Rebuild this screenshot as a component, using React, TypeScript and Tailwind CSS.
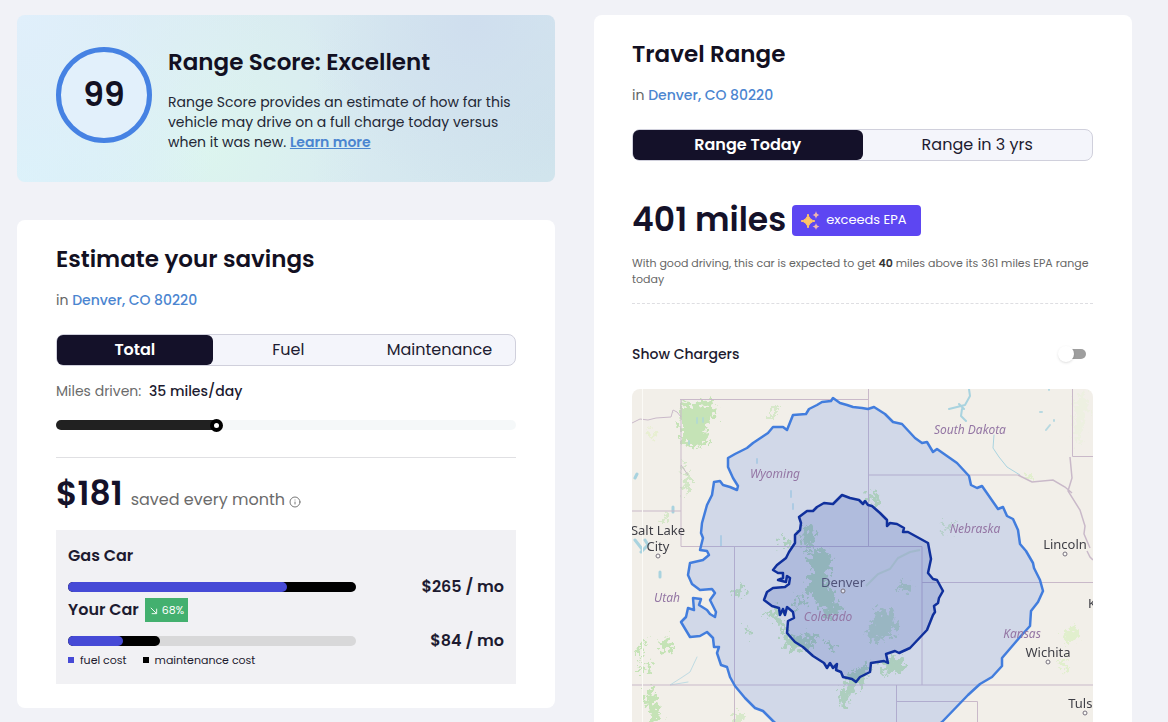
import React, { useState } from 'react';
import { Info } from 'lucide-react';

const costs = [
    { name: 'Gas Car', price: '$265 / mo', total: 100, fuel: 76, saving: '' },
    { name: 'Your Car', price: '$84 / mo', total: 32, fuel: 19, saving: '68%' },
];

const OUTER_RANGE =
    'M833 398L840 403L847 405L853 407L862 408L868 409L874 407L885 414L893 422L902 424L915 438L922 443L927 442L933 452L937 449L957 463L969 476L971 485L977 488L982 486L998 509L1003 507L1007 516L1013 519L1018 530L1020 544L1026 551L1033 563L1034 568L1040 580L1043 591L1038 602L1031 611L1030 626L1020 637L1002 658L1002 666L992 677L980 684L968 695L942 722L905 755L860 775L810 755L773 721L763 711L755 708L745 698L735 686L730 677L727 667L721 665L717 653L719 647L714 647L713 638L707 632L700 636L690 637L681 622L686 617L688 608L694 610L693 598L701 599L699 605L707 610L710 614L715 617L716 612L710 600L715 593L712 589L700 590L692 584L688 575L690 563L703 560L709 555L707 551L700 550L703 538L701 533L702 523L707 505L712 495L714 482L720 481L723 485L730 487L737 490L738 486L733 478L728 467L728 458L735 454L747 448L753 443L768 433L773 427L783 427L787 430L789 425L793 415L806 414L809 409L817 405L822 402L831 401Z';

const INNER_RANGE =
    'M842 495L850 498L859 500L863 504L865 501L868 505L872 506L880 513L887 520L887 526L890 523L897 524L904 528L903 532L908 532L928 543L931 559L928 573L933 579L937 580L943 591L939 598L938 603L934 606L935 612L933 615L927 630L910 648L899 653L895 651L886 654L888 663L884 661L871 663L870 672L860 677L856 682L852 679L843 677L841 672L836 670L837 664L833 668L830 663L827 668L824 663L813 656L803 647L795 642L787 633L788 621L794 618L793 612L787 607L785 615L783 609L780 615L779 608L772 606L764 600L767 592L773 588L785 587L789 584L790 578L787 576L786 582L778 580L783 578L783 573L778 573L773 570L777 565L786 558L789 552L795 543L795 535L800 530L801 523L799 517L807 511L813 511L817 507L824 503L833 504Z';

function Location() {
    return (
        <p className="mt-[13px] text-sm leading-5 text-[#666]">
            in{' '}
            <a href="#location" className="font-medium text-[#4b85d0]">
                Denver, CO 80220
            </a>
        </p>
    );
}

type TabsProps = { items: string[]; className: string };

function Tabs({ items, className }: TabsProps) {
    const [active, setActive] = useState(0);

    return (
        <div className={`mt-6 grid h-8 rounded-lg border border-[#d0d0dc] bg-[#f4f5fb] ${className}`}>
            {items.map((item, i) => (
                <button
                    key={item}
                    type="button"
                    onClick={() => setActive(i)}
                    className={
                        i === active
                            ? 'rounded-md bg-[#141129] text-base font-semibold text-white'
                            : 'text-base text-[#1d1b30]'
                    }
                >
                    {item}
                </button>
            ))}
        </div>
    );
}

function ScoreCard() {
    return (
        <section className="flex items-start gap-4 rounded-lg bg-[radial-gradient(circle_at_85%_5%,#cfdeee_0%,#cfdeee00_35%),radial-gradient(circle_at_100%_70%,#cfe3ec_0%,#cfe3ec00_45%),radial-gradient(circle_at_0%_0%,#e0effb_0%,#e0effb00_45%),radial-gradient(circle_at_0%_100%,#daf3fa_0%,#daf3fa00_35%),radial-gradient(circle_at_35%_80%,#dcf5ee_0%,#dcf5ee00_45%)] bg-[#d9ebf1] pt-[29px] pr-8 pb-[30px] pl-[39px]">
            <div className="mt-[3px] flex size-24 shrink-0 items-center justify-center rounded-full border-[5px] border-[#4682e3] bg-[#e2f0fb] text-[33px] font-semibold text-[#121022]">
                99
            </div>
            <div>
                <h2 className="text-[23px] leading-9 font-semibold text-[#121022]">Range Score: Excellent</h2>
                <p className="mt-3 max-w-[345px] text-sm leading-5 text-[#232735]">
                    Range Score provides an estimate of how far this vehicle may drive on a full charge today versus
                    when it was new.{' '}
                    <a href="#score" className="font-semibold text-[#4b85d0] underline">
                        Learn more
                    </a>
                </p>
            </div>
        </section>
    );
}

function SavingsCard() {
    const [miles, setMiles] = useState(35);
    const filled = ((miles - 1) / 99) * 100;

    return (
        <section className="rounded-lg bg-white px-[39px] pt-[21px] pb-6">
            <h2 className="text-[23px] leading-9 font-semibold text-[#121022]">Estimate your savings</h2>
            <Location />
            <Tabs items={['Total', 'Fuel', 'Maintenance']} className="grid-cols-[34%_1fr_1fr]" />

            <label htmlFor="miles" className="mt-[15px] block text-sm leading-5 text-[#6b6b6b]">
                Miles driven: <span className="ml-1 font-medium text-[#1d1b30]">{miles} miles/day</span>
            </label>
            <input
                id="miles"
                type="range"
                min={1}
                max={100}
                value={miles}
                onChange={(e) => setMiles(Number(e.target.value))}
                style={{ backgroundImage: `linear-gradient(to right, #212121 ${filled}%, #f5f8f9 ${filled}%)` }}
                className="mt-[19px] block h-[10px] w-full appearance-none rounded-full [&::-webkit-slider-thumb]:size-[13px] [&::-webkit-slider-thumb]:appearance-none [&::-webkit-slider-thumb]:rounded-full [&::-webkit-slider-thumb]:border-4 [&::-webkit-slider-thumb]:border-black [&::-webkit-slider-thumb]:bg-white"
            />

            <div className="mt-[27px] flex items-baseline border-t border-[#e0e0e3] pt-3">
                <span className="text-[33px] leading-[48px] font-semibold text-[#141129]">$181</span>
                <span className="ml-2 text-base text-[#6b6b6b]">saved every month</span>
                <Info size={12} className="mt-4 ml-1 self-center text-[#777]" />
            </div>

            {/* Monthly cost comparison */}
            <div className="mt-3 bg-[#f1f1f4] px-3 pt-[14px] pb-4">
                {costs.map((car) => (
                    <div key={car.name}>
                        <div className="flex h-6 items-center gap-[6px]">
                            <h3 className="text-base font-semibold text-[#1d1b30]">{car.name}</h3>
                            {car.saving && (
                                <span className="flex h-6 items-center gap-1 bg-[#43b06f] px-1 text-[11px] text-white">
                                    <svg viewBox="0 0 10 10" className="size-[9px]" fill="none" stroke="currentColor">
                                        <path d="M2 2L8 8M3 8.500H8.500V3" />
                                    </svg>
                                    {car.saving}
                                </span>
                            )}
                        </div>
                        <div className="mt-2 flex h-[22px] items-center justify-between">
                            <div className="h-[10px] w-[66%] rounded-full bg-[#d8d8d9]">
                                <div className="h-full rounded-full bg-black" style={{ width: `${car.total}%` }}>
                                    <div
                                        className="h-full rounded-full bg-[#464ad6]"
                                        style={{ width: `${(car.fuel / car.total) * 100}%` }}
                                    />
                                </div>
                            </div>
                            <span className="text-base font-semibold text-[#1d1b30]">{car.price}</span>
                        </div>
                    </div>
                ))}
                <div className="flex gap-4 text-[11px] leading-4 text-[#1d1b30]">
                    <span className="flex items-center gap-[6px]">
                        <i className="size-[6px] bg-[#464ad6]" />
                        fuel cost
                    </span>
                    <span className="flex items-center gap-[6px]">
                        <i className="size-[6px] bg-black" />
                        maintenance cost
                    </span>
                </div>
            </div>
        </section>
    );
}

function RangeMap() {
    return (
        <svg
            viewBox="632 389 461 400"
            className="mt-[25px] block w-full rounded-lg font-['Noto_Sans',sans-serif]"
            role="img"
            aria-label="Map of the travel range around Denver"
        >
            <defs>
                <filter id="rough" x="-30%" y="-30%" width="160%" height="160%">
                    <feTurbulence type="fractalNoise" baseFrequency="0.2" numOctaves="3" seed="4" />
                    <feDisplacementMap in="SourceGraphic" scale="22" xChannelSelector="R" yChannelSelector="G" />
                </filter>
            </defs>
            <rect x="632" y="389" width="461" height="400" fill="#f2efe9" />

            {/* Forests and parks */}
            <g filter="url(#rough)" fill="#c5e3b6">
                <path d="M681 400L694 404L712 401L716 412L707 425L708 445L692 448L680 440Z" />
                <path d="M681 463L690 476L690 492L686 494Z" opacity=".7" />
                <path d="M663 515L669 512L667 521L661 521Z" opacity=".6" />
                <path d="M771 408h5v9h-5z" opacity=".6" />
                <path d="M640 645L646 640L642 655L636 660Z" />
                <path d="M660 645L669 636L673 648L662 653Z" />
                <path d="M645 664L652 663L650 674L644 672ZM636 668h4v5h-4z" />
                <path d="M648 688L654 692L657 706L662 722L655 733L649 707L644 703Z" />
                <path d="M736 588L745 586L743 595L734 596Z" />
                <path d="M733 712L742 712L746 725L733 728Z" opacity=".6" />
                <path d="M866 492L879 493L880 507L870 503Z" />
                <path d="M941 526L955 522L951 532L942 529Z" opacity=".7" />
                <path d="M1062 633L1076 624L1080 638L1066 645Z" fill="#e1efcd" />
                <path d="M1058 660L1068 658L1065 674Z" fill="#e1efcd" />
                <path d="M1020 475L1032 474L1032 480Z" fill="#e1efcd" />
                <path d="M647 430L658 431L651 440Z" fill="#e8efd2" />
                <path d="M1075 395L1085 393L1088 402L1080 440L1076 450Z" fill="#e9f0dc" opacity=".6" />
                <path d="M746 629L753 630L750 635L745 633Z" />
                <path d="M778 538L787 537L792 545L785 549Z" />
                <path d="M802 528L812 526L815 541L808 549L803 543Z" />
                <path d="M805 549L826 549L832 557L826 577L836 600L842 610L828 620L818 604L806 588L813 570Z" />
                <path d="M762 613L778 608L784 622L790 637L781 632L776 619Z" />
                <path d="M782 637L805 635L820 632L812 647L796 652L784 646Z" />
                <path d="M826 640L834 642L831 652L826 650Z" />
                <path d="M793 598L803 597L806 605L795 608Z" />
                <path d="M846 676L858 668L870 662L866 678L850 694L846 710L838 702Z" />
                <path d="M878 610L888 608L898 626L889 637L873 642L866 636Z" opacity=".8" />
                <path d="M884 662L904 655L903 672L880 675Z" />
                <path d="M902 582L912 586L913 592L899 590Z" opacity=".8" />
            </g>
            <path d="M866 586L878 574L890 569L898 558L910 552L920 550" fill="none" stroke="#c5e3b6" strokeWidth="2" opacity=".5" />

            {/* Lakes and rivers */}
            <g fill="none" stroke="#a9d3df" strokeWidth="2" strokeLinejoin="round" strokeLinecap="round">
                <path d="M969 389L970 396L965 405L949 409M962 409L961 416L966 421M959 404L964 409" />
                <path d="M994 435L993 448L999 457L1007 467L1020 475" strokeWidth="1" />
                <path d="M635 478L637 474M673 507V512M635 540L642 549M645 540L648 545L641 552M660 572V577" strokeWidth="3" />
                <path d="M697 657L690 672L681 678L670 685L688 682" strokeWidth="1" opacity=".7" />
                <path d="M697 418v5M703 418v4M689 441v3M757 459v4M791 491v6M793 504v5M721 536v10" opacity=".6" />
                <path d="M1046 430L1050 425M1054 420v1M1040 412h2M1049 389v1" opacity=".8" />
            </g>

            {/* State borders */}
            <g fill="none" stroke="#c9b9c9" strokeWidth="1">
                <path d="M680 399.500H868.500M681 399V546.500H922M868.500 389V546.500M868.500 475H1018M734.500 546.500V789M632 685H1093M632 511H681M922 546.500V685M922 582.500H1093M1072.500 389V456.500H1093M896.500 685V789M896 701.500H977.500V789" />
                <path d="M632 423L640 419L648 420L656 418L671 417L673 410L677 412L681 417M681 465L688 475" />
                <path d="M1070 457L1072 478L1068 491L1080 510L1085 526L1084 534L1090 548M1018 475L1032 482L1053 480L1065 487L1072 493M1087 551L1090 557L1093 560" strokeWidth="1.500" />
                <path d="M642.500 389V789" stroke="#fbfaf6" />
            </g>

            <path d={OUTER_RANGE} fill="#4676e3" fillOpacity=".19" stroke="#427ddd" strokeWidth="2.500" strokeLinejoin="round" />
            <path d={INNER_RANGE} fill="#1e3fae" fillOpacity=".18" stroke="#10309c" strokeWidth="2.500" strokeLinejoin="round" />

            <g fontSize="12" fontStyle="italic" fill="#9476a4" textAnchor="middle">
                <text x="970" y="434">South Dakota</text>
                <text x="775" y="478">Wyoming</text>
                <text x="975" y="533">Nebraska</text>
                <text x="667" y="602">Utah</text>
                <text x="828" y="621">Colorado</text>
                <text x="1022" y="638">Kansas</text>
            </g>
            <g fontSize="13" fill="#3f3f46" textAnchor="middle">
                <text x="658" y="535">Salt Lake</text>
                <text x="658" y="551">City</text>
                <text x="843" y="587" fill="#50547a">Denver</text>
                <text x="1065" y="549">Lincoln</text>
                <text x="1048" y="657">Wichita</text>
                <text x="1084" y="708">Tulsa</text>
                <text x="1092" y="608">K</text>
            </g>
            <g fill="#fff" fillOpacity=".6" stroke="#77717d">
                <circle cx="658" cy="556" r="2" />
                <circle cx="843" cy="591" r="2" />
                <circle cx="1065" cy="554" r="2" />
                <circle cx="1048" cy="662" r="2" />
                <circle cx="1085" cy="713" r="2" />
            </g>
        </svg>
    );
}

function TravelCard() {
    const [chargers, setChargers] = useState(false);

    return (
        <section className="rounded-lg bg-white pt-[21px] pr-[39px] pb-10 pl-[38px]">
            <h2 className="text-[23px] leading-9 font-semibold text-[#121022]">Travel Range</h2>
            <Location />
            <Tabs items={['Range Today', 'Range in 3 yrs']} className="grid-cols-2" />

            <div className="mt-[35px] flex items-center gap-[6px]">
                <span className="text-[33px] leading-[48px] font-semibold text-[#141129]">401 miles</span>
                <span className="flex h-[31px] items-center gap-[6px] rounded-sm bg-[#5d46f2] pr-[14px] pl-[9px] text-[13px] text-white">
                    <svg viewBox="0 0 19 19" className="size-[19px]">
                        <path d="M7 3Q8 9 14 10Q8 11 7 17Q6 11 0 10Q6 9 7 3Z" fill="#ffc568" stroke="#ffc568" />
                        <path d="M15 0Q15.500 3.500 18.500 4Q15.500 4.500 15 8Q14.500 4.500 11.500 4Q14.500 3.500 15 0ZM15 12Q15.500 15 18.500 15.500Q15.500 16 15 19Q14.500 16 11.500 15.500Q14.500 15 15 12Z" fill="#eeb5b0" />
                    </svg>
                    exceeds EPA
                </span>
            </div>
            <p className="mt-[11px] border-b border-dashed border-[#dedee2] pb-4 text-[11px] leading-4 text-[#666]">
                With good driving, this car is expected to get <b className="font-semibold text-[#333]">40</b> miles
                above its 361 miles EPA range today
            </p>

            <label className="mt-10 flex h-5 items-center justify-between pr-[7px] text-sm font-medium text-[#1d1b30]">
                Show Chargers
                <input
                    type="checkbox"
                    checked={chargers}
                    onChange={(e) => setChargers(e.target.checked)}
                    className="flex h-[10px] w-6 appearance-none items-center rounded-full bg-[#9e9e9e] before:-ml-1 before:size-4 before:rounded-full before:bg-white before:shadow checked:bg-[#4682e3] checked:before:ml-3"
                />
            </label>
            <RangeMap />
        </section>
    );
}

export default function App() {
    return (
        <main className="grid min-h-screen grid-cols-2 items-start gap-[39px] bg-[#f1f2f7] pt-[15px] pr-9 pl-[17px] font-['Poppins','Inter',sans-serif]">
            <div className="flex flex-col gap-[38px]">
                <ScoreCard />
                <SavingsCard />
            </div>
            <TravelCard />
        </main>
    );
}
